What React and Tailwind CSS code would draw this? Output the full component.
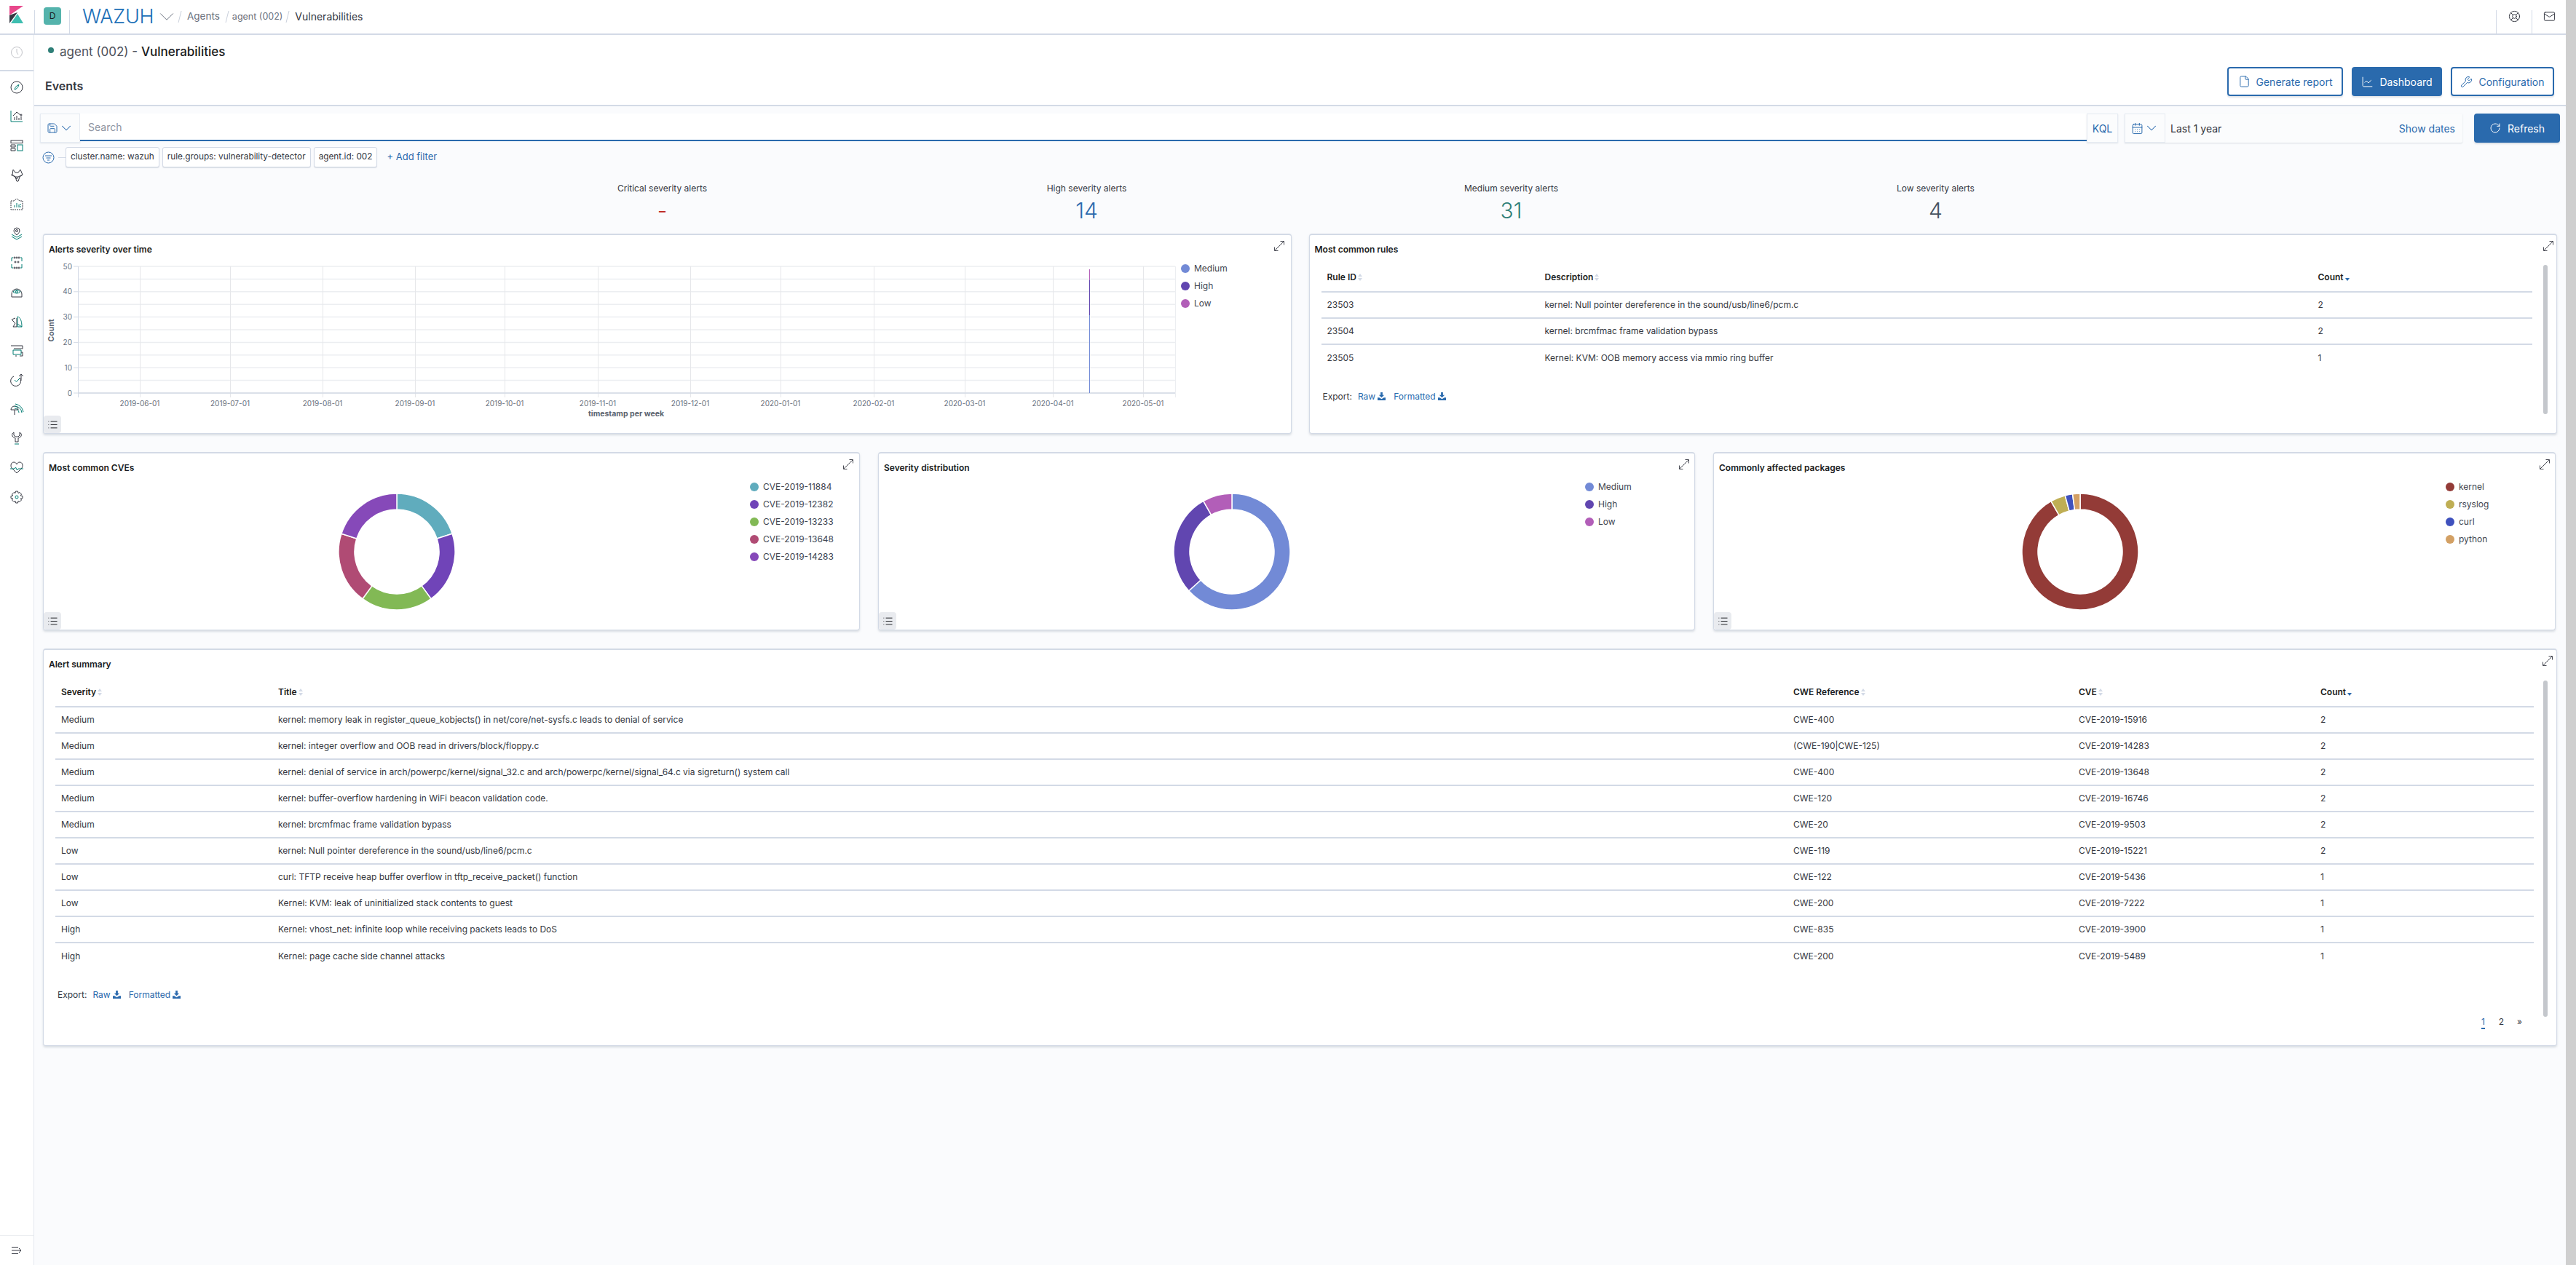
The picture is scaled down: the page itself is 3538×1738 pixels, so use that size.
import { ChartLine, File, LifeBuoy, Mail, RotateCw, Save, Wrench, CalendarDays, ChevronDown, List } from 'lucide-react';

const ink = '#343741';
const teal = '#017d73';

// Two tone app icons of the side nav
function NavIcon({ children, faded }) {
  return (
    <svg viewBox="0 0 20 20" fill="none" stroke={faded ? '#c2c4c9' : ink} strokeWidth="1" className="w-[20px] h-[20px]">
      {children}
    </svg>
  );
}

const navIcons = [
  <NavIcon key="discover">
    <circle cx="10" cy="10" r="8" />
    <path d="M13 6.5c-3 .8-5 2.800-6 6.500 3-.8 5-3 6-6.500z" stroke={teal} />
  </NavIcon>,
  <NavIcon key="visualize">
    <path d="M2 2v15h16" stroke={teal} />
    <path d="M5 9l5-5 5 4" />
    <path d="M7 15v-4M10 15V9M13 15v-3M16 15v-5" />
    <circle cx="16" cy="8" r="1" />
  </NavIcon>,
  <NavIcon key="dashboard">
    <rect x="2" y="3" width="16" height="3.500" />
    <path d="M2 9h6v3H2zM2 14h6v3H2z" />
    <rect x="11" y="9" width="7" height="8" stroke={teal} />
  </NavIcon>,
  <NavIcon key="wazuh">
    <path d="M5 2l3 4h4l3-4 3 7-4 3-2 6h-2l-2-6-4-3z" />
    <path d="M2 9l6 3h4l6-3M8 12l2 3 2-3" />
  </NavIcon>,
  <NavIcon key="canvas">
    <path d="M2 5h4l4-3 4 3h4v12H2z" strokeDasharray="2 1" />
    <path d="M7 14v-3M10 14V8M13 14v-4" stroke={teal} />
    <path d="M15 9v2M15 12v2" stroke={teal} />
  </NavIcon>,
  <NavIcon key="maps">
    <path d="M10 12c-3-3-4-4.500-4-6a4 4 0 018 0c0 1.500-1 3-4 6z" />
    <circle cx="10" cy="6" r="1.500" />
    <path d="M3 11l7 4 7-4M3 14l7 4 7-4" stroke={teal} />
  </NavIcon>,
  <NavIcon key="ml">
    <path d="M5 3H3v5M15 3h2v5M5 17H3v-5M15 17h2v-5" stroke={teal} />
    <circle cx="7" cy="3" r="1" /><circle cx="10" cy="3" r="1" /><circle cx="13" cy="3" r="1" />
    <circle cx="8" cy="9" r="1" /><circle cx="12" cy="9" r="1" />
    <circle cx="7" cy="17" r="1" /><circle cx="10" cy="17" r="1" /><circle cx="13" cy="17" r="1" />
  </NavIcon>,
  <NavIcon key="metrics">
    <path d="M3 17v-4a7 7 0 1114 0v4H3z" />
    <path d="M5 10c3-3 7-3 10 0-3 2.500-7 2.500-10 0z" stroke={teal} />
    <circle cx="10" cy="10" r="1.500" stroke={teal} />
  </NavIcon>,
  <NavIcon key="logs">
    <path d="M8 5l-5 2 5 5-3 5h5V5" />
    <path d="M11 3c4 1 6 6 6 14h-6z" stroke={teal} />
    <path d="M11 13l6 4" stroke={teal} />
  </NavIcon>,
  <NavIcon key="apm">
    <path d="M2 3h16v4H6" />
    <path d="M5 9h11v6H5z" stroke={teal} />
    <path d="M16 12h2v5h-4M8 17h2" />
  </NavIcon>,
  <NavIcon key="uptime">
    <path d="M14 7a7 7 0 11-8-2" />
    <path d="M7 10l2.500 2.500L14 8" stroke={teal} />
    <path d="M16 11V2M13 5l3-3 3 3" />
  </NavIcon>,
  <NavIcon key="siem">
    <path d="M7 18v-7M2 11a5 5 0 0110 0H2z" />
    <path d="M7 6a10 10 0 0110 9M8 3a14 14 0 0111 11M7 9a6 6 0 016 6" stroke={teal} />
  </NavIcon>,
  <NavIcon key="devtools">
    <path d="M6 2c-2 1-3 3-2 5 .5 1.500 2 2.500 4 3v5h4v-5c2-.5 3.500-1.500 4-3 1-2 0-4-2-5v4l-2 2h-4L6 6z" />
    <path d="M7 18h6" stroke={teal} />
  </NavIcon>,
  <NavIcon key="monitoring">
    <path d="M10 18l-7-7C1 8 2 3 6 3c2 0 3 1 4 3 1-2 2-3 4-3 4 0 5 5 3 8z" />
    <path d="M1 12h6l1.500-2 2 4 1.500-2h7" stroke={teal} />
  </NavIcon>,
  <NavIcon key="management">
    <path d="M8.500 2h3l.5 2.500 2-1 2.500 2.500-1.200 2 2.700.5v3l-2.700.5 1.200 2-2.500 2.500-2-1.200-.5 2.700h-3l-.5-2.700-2 1.200L3.500 14l1.200-2L2 11.500v-3L4.700 8 3.500 6 6 3.500l2 1z" />
    <circle cx="10" cy="10" r="2" stroke={teal} />
  </NavIcon>,
];

function KibanaLogo() {
  return (
    <svg viewBox="0 0 19 24" className="w-[19px] h-[24px]">
      <path d="M0 0h19L0 13z" fill="#e8488b" />
      <path d="M0 13l11-4-11 15z" fill="#343741" />
      <path d="M2 24h17l-8-13z" fill="#3ebeb0" />
    </svg>
  );
}

function Slash({ className }) {
  return (
    <svg viewBox="0 0 6 16" className={`w-[6px] h-[16px] shrink-0 ${className || ''}`} stroke="#c9cfdb" fill="none">
      <path d="M5 0L1 16" />
    </svg>
  );
}

function Expand({ className }) {
  return (
    <svg viewBox="0 0 16 16" fill="none" stroke={ink} strokeWidth="0.9" className={`absolute w-[16px] h-[16px] ${className}`}>
      <path d="M2 14L14 2M9.500 1.500h5v5M1.500 9.500v5h5" />
    </svg>
  );
}

function LegendToggle() {
  return (
    <div className="absolute left-0 bottom-0 w-[24px] h-[24px] bg-[#e9ebef] rounded-[4px] flex items-center justify-center">
      <List className="w-[15px] h-[15px] text-[#1a1c21]" strokeWidth={1.5} />
    </div>
  );
}

function Panel({ title, className, children }) {
  return (
    <div className={`relative bg-white rounded-[4px] border border-t-2 border-[#d3dae6] shadow-[0_2px_3px_rgba(152,162,179,0.35)] ${className}`}>
      <div className="h-[34px] pt-[11px] pl-[7px] text-[12px] leading-[18px] font-semibold text-[#1a1c21]">{title}</div>
      {children}
    </div>
  );
}

function polar(cx, cy, r, deg) {
  const a = ((deg - 90) * Math.PI) / 180;
  return [cx + r * Math.cos(a), cy + r * Math.sin(a)];
}

function Donut({ slices }) {
  const total = slices.reduce((s, x) => s + x.value, 0);
  let start = 0;
  return (
    <svg viewBox="0 0 160 160" className="w-[160px] h-[160px]">
      {slices.map((s) => {
        const sweep = (s.value / total) * 360;
        const end = start + sweep;
        const large = sweep > 180 ? 1 : 0;
        const [x1, y1] = polar(80, 80, 80, start);
        const [x2, y2] = polar(80, 80, 80, end);
        const [x3, y3] = polar(80, 80, 58, end);
        const [x4, y4] = polar(80, 80, 58, start);
        start = end;
        return (
          <path
            key={s.label}
            d={`M${x1} ${y1}A80 80 0 ${large} 1 ${x2} ${y2}L${x3} ${y3}A58 58 0 ${large} 0 ${x4} ${y4}Z`}
            fill={s.color}
            stroke="#fff"
            strokeWidth="1.5"
          />
        );
      })}
    </svg>
  );
}

function Legend({ items, className }) {
  return (
    <div className={`flex flex-col ${className}`}>
      {items.map((i) => (
        <div key={i.label} className="h-[24px] flex items-center gap-[6px] text-[12px] text-[#414550]">
          <span className="w-[12px] h-[12px] rounded-full" style={{ backgroundColor: i.color }} />
          {i.label}
        </div>
      ))}
    </div>
  );
}

function SortIcon({ active }) {
  return (
    <svg viewBox="0 0 6 10" className="inline-block w-[6px] h-[10px] ml-[2px] align-[-1px]">
      {!active && <path d="M3 0l3 4H0z" fill="#d3dae6" />}
      <path d="M3 10L0 6h6z" fill={active ? '#2a6aad' : '#d3dae6'} />
    </svg>
  );
}

function DownloadIcon() {
  return (
    <svg viewBox="0 0 12 12" className="inline-block w-[11px] h-[11px] ml-[3px] align-[-1px]" fill="#2a6aad">
      <path d="M4.500 0h3v4H10L6 8 2 4h2.500zM0 8h2.500L6 10l3.500-2H12v4H0z" />
    </svg>
  );
}

function ExportLinks({ className }) {
  return (
    <div className={`h-[18px] leading-[18px] text-[12px] text-[#343741] ${className}`}>
      Export:
      <span className="ml-[8px] text-[#2a6aad]">Raw<DownloadIcon /></span>
      <span className="ml-[11px] text-[#2a6aad]">Formatted<DownloadIcon /></span>
    </div>
  );
}

function DataTable({ widths, columns, rows, className }) {
  return (
    <table className={`table-fixed text-[12px] text-[#343741] border-collapse ${className}`}>
      <colgroup>
        {widths.map((w, i) => (
          <col key={i} style={{ width: w }} />
        ))}
      </colgroup>
      <thead>
        <tr className="h-[40px] border-b-2 border-[#d3dae6]">
          {columns.map((c, i) => (
            <th key={c} className="pl-[8px] text-left font-semibold text-[#1a1c21]">
              {c}
              <SortIcon active={i === columns.length - 1} />
            </th>
          ))}
        </tr>
      </thead>
      <tbody>
        {rows.map((r, i) => (
          <tr key={i} className={`h-[36px] ${i < rows.length - 1 ? 'border-b-2 border-[#d3dae6]' : ''}`}>
            {r.map((cell, j) => (
              <td key={j} className="pl-[8px] whitespace-nowrap">{cell}</td>
            ))}
          </tr>
        ))}
      </tbody>
    </table>
  );
}

const severity = [
  { label: 'Medium', color: '#728ad6', value: 31 },
  { label: 'High', color: '#6146b0', value: 14 },
  { label: 'Low', color: '#b25eb8', value: 4 },
];

const cves = [
  { label: 'CVE-2019-11884', color: '#60acbd', value: 1 },
  { label: 'CVE-2019-12382', color: '#7044b8', value: 1 },
  { label: 'CVE-2019-13233', color: '#82b955', value: 1 },
  { label: 'CVE-2019-13648', color: '#b04b74', value: 1 },
  { label: 'CVE-2019-14283', color: '#8649b9', value: 1 },
];

const packages = [
  { label: 'kernel', color: '#933b37', value: 44 },
  { label: 'rsyslog', color: '#bfae54', value: 2 },
  { label: 'curl', color: '#3f51bd', value: 1 },
  { label: 'python', color: '#d3a064', value: 1 },
];

const ruleRows = [
  ['23503', 'kernel: Null pointer dereference in the sound/usb/line6/pcm.c', '2'],
  ['23504', 'kernel: brcmfmac frame validation bypass', '2'],
  ['23505', 'Kernel: KVM: OOB memory access via mmio ring buffer', '1'],
];

const alertRows = [
  ['Medium', 'kernel: memory leak in register_queue_kobjects() in net/core/net-sysfs.c leads to denial of service', 'CWE-400', 'CVE-2019-15916', '2'],
  ['Medium', 'kernel: integer overflow and OOB read in drivers/block/floppy.c', '(CWE-190|CWE-125)', 'CVE-2019-14283', '2'],
  ['Medium', 'kernel: denial of service in arch/powerpc/kernel/signal_32.c and arch/powerpc/kernel/signal_64.c via sigreturn() system call', 'CWE-400', 'CVE-2019-13648', '2'],
  ['Medium', 'kernel: buffer-overflow hardening in WiFi beacon validation code.', 'CWE-120', 'CVE-2019-16746', '2'],
  ['Medium', 'kernel: brcmfmac frame validation bypass', 'CWE-20', 'CVE-2019-9503', '2'],
  ['Low', 'kernel: Null pointer dereference in the sound/usb/line6/pcm.c', 'CWE-119', 'CVE-2019-15221', '2'],
  ['Low', 'curl: TFTP receive heap buffer overflow in tftp_receive_packet() function', 'CWE-122', 'CVE-2019-5436', '1'],
  ['Low', 'Kernel: KVM: leak of uninitialized stack contents to guest', 'CWE-200', 'CVE-2019-7222', '1'],
  ['High', 'Kernel: vhost_net: infinite loop while receiving packets leads to DoS', 'CWE-835', 'CVE-2019-3900', '1'],
  ['High', 'Kernel: page cache side channel attacks', 'CWE-200', 'CVE-2019-5489', '1'],
];

const stats = [
  { label: 'Critical severity alerts', value: '-', color: 'text-[#bd271e]' },
  { label: 'High severity alerts', value: '14', color: 'text-[#2a6aad]' },
  { label: 'Medium severity alerts', value: '31', color: 'text-[#2f7f78]' },
  { label: 'Low severity alerts', value: '4', color: 'text-[#45525f]' },
];

const xTicks = [
  [192, '2019-06-01'], [316, '2019-07-01'], [443, '2019-08-01'], [570, '2019-09-01'],
  [693, '2019-10-01'], [821, '2019-11-01'], [948, '2019-12-01'], [1072, '2020-01-01'],
  [1200, '2020-02-01'], [1325, '2020-03-01'], [1446, '2020-04-01'], [1570, '2020-05-01'],
];

function SeverityChart() {
  const grid = Array.from({ length: 11 }, (_, i) => 367 + i * 17.4);
  return (
    <svg viewBox="60 358 1560 222" className="w-[1560px] h-[222px] shrink-0" fontFamily="Inter, sans-serif">
      {grid.map((y) => (
        <line key={y} x1="107" x2="1614" y1={y} y2={y} stroke="#eceef1" strokeWidth="1.5" />
      ))}
      {xTicks.map(([x, label]) => (
        <g key={x}>
          <line x1={x + 0.5} x2={x + 0.5} y1="367" y2="547" stroke="#e6e7ea" />
          <text x={x} y="559" textAnchor="middle" fontSize="10" fill="#69707d">{label}</text>
        </g>
      ))}
      <line x1="107.500" x2="107.500" y1="367" y2="547" stroke="#d3dae6" />
      <line x1="1614.500" x2="1614.500" y1="367" y2="547" stroke="#eceef1" />
      <line x1="107" x2="1614" y1="541" y2="541" stroke="#d3dae6" strokeWidth="1.5" />
      {[50, 40, 30, 20, 10, 0].map((v, i) => (
        <g key={v}>
          <line x1="101" x2="107" y1={367 + i * 34.8} y2={367 + i * 34.8} stroke="#d3dae6" />
          <text x="99" y={370.500 + i * 34.8} textAnchor="end" fontSize="10" fill="#69707d">{v}</text>
        </g>
      ))}
      <line x1="1496.500" x2="1496.500" y1="434" y2="541" stroke="#728ad6" />
      <line x1="1496.500" x2="1496.500" y1="386" y2="434" stroke="#6146b0" />
      <line x1="1496.500" x2="1496.500" y1="371" y2="386" stroke="#b25eb8" />
      <text x="860" y="573" textAnchor="middle" fontSize="10.500" fontWeight="700" fill="#5c6470">timestamp per week</text>
      <text transform="translate(74 455) rotate(-90)" textAnchor="middle" fontSize="10.500" fontWeight="700" fill="#5c6470">Count</text>
    </svg>
  );
}

export default function App() {
  return (
    <div className="flex w-[3538px] h-[1738px] overflow-hidden bg-[#fafbfd] font-[Inter,sans-serif] text-[#343741]">
      <div className="w-[3524px] h-full flex flex-col shrink-0">
        {/* Top bar */}
        <header className="h-[48px] shrink-0 bg-white border-b-2 border-[#d3dae6] flex items-stretch">
          <div className="w-[47px] pt-[8px] pl-[13px]">
            <KibanaLogo />
          </div>
          <div className="mt-[14px] w-[49px] border-l border-r border-[#d3dae6]">
            <div className="-mt-[4px] ml-[12px] w-[24px] h-[24px] rounded-[4px] bg-[#54b3ac] flex items-center justify-center text-[12px] text-[#1a1c21]">
              D
            </div>
          </div>
          <div className="pl-[17px] flex items-center pb-[2px] text-[14px]">
            <span className="w-[98px] text-[27px] font-light tracking-[-0.2px] text-[#1c70b8] leading-none whitespace-nowrap">WAZUH</span>
            <ChevronDown className="w-[34px] h-[34px] text-[#69707d] ml-[1px] mt-[2px]" strokeWidth={0.7} />
            <Slash className="-ml-[2px] mt-[2px]" />
            <span className="ml-[7px] text-[13.500px] text-[#69707d]">Agents</span>
            <Slash className="ml-[7px] mt-[2px]" />
            <span className="ml-[4px] text-[12.500px] mt-[3px] text-[#69707d]">agent (002)</span>
            <Slash className="ml-[4px] mt-[2px]" />
            <span className="ml-[7px] text-[#343741]">Vulnerabilities</span>
          </div>
          <div className="ml-auto mt-[14px] flex h-[32px]">
            <div className="w-[49px] border-l border-[#d3dae6] flex justify-center">
              <LifeBuoy className="w-[17px] h-[17px]" strokeWidth={1.4} />
            </div>
            <div className="w-[47px] border-l border-[#d3dae6] flex justify-center">
              <Mail className="w-[17px] h-[17px]" strokeWidth={1.4} />
            </div>
          </div>
        </header>

        <div className="flex flex-1 min-h-0">
          {/* Side nav */}
          <aside className="w-[47px] shrink-0 bg-white border-r border-[#e4e8ef] flex flex-col">
            <div className="h-[50px] border-b-2 border-[#d3dae6] flex items-center justify-center">
              <NavIcon faded>
                <circle cx="10" cy="10" r="7.500" />
                <path d="M10 5v5l2 3" />
              </NavIcon>
            </div>
            <nav className="flex flex-col items-center pt-[12px] gap-[20.200px]">{navIcons}</nav>
            <div className="mt-auto h-[41px] border-t border-[#eceef1] flex items-center justify-center">
              <svg viewBox="0 0 16 12" className="w-[16px] h-[12px]" fill="none" stroke="#343741" strokeWidth="1">
                <path d="M1 1.500h9M1 6h12M1 10.500h9M11 3l3 3-3 3" />
              </svg>
            </div>
          </aside>

          <main className="flex-1 min-w-0 flex flex-col">
            {/* Title block */}
            <div className="h-[98px] shrink-0 bg-white border-b-2 border-[#d3dae6] relative">
              <div className="pt-[11px] pl-[19px] flex items-center gap-[8px] text-[17px] leading-[24px]">
                <span className="w-[8px] h-[8px] rounded-full bg-[#2f7f78] -mt-[4px]" />
                <span className="text-[#4d515b]">
                  agent (002) - <span className="font-medium text-[#1a1c21]">Vulnerabilities</span>
                </span>
              </div>
              <div className="flex items-center justify-between mt-[9px] pl-[15px] pr-[16px] h-[40px]">
                <span className="mt-[12px] text-[16px] font-semibold text-[#343741]">Events</span>
                <div className="flex gap-[12px] text-[14px]">
                  <button className="w-[159px] h-[40px] flex items-center justify-center gap-[8px] border-2 border-[#2a6aad] rounded-[4px] text-[#2a6aad] shadow-[0_2px_2px_rgba(152,162,179,0.3)]">
                    <File className="w-[17px] h-[18px]" strokeWidth={1.4} />
                    Generate report
                  </button>
                  <button className="w-[124px] h-[40px] flex items-center justify-center gap-[8px] bg-[#2a6aad] rounded-[4px] text-white shadow-[0_2px_2px_rgba(152,162,179,0.3)]">
                    <ChartLine className="w-[17px] h-[17px]" strokeWidth={1.4} />
                    Dashboard
                  </button>
                  <button className="w-[142px] h-[40px] flex items-center justify-center gap-[8px] border-2 border-[#2a6aad] rounded-[4px] text-[#2a6aad] shadow-[0_2px_2px_rgba(152,162,179,0.3)]">
                    <Wrench className="w-[17px] h-[17px]" strokeWidth={1.4} />
                    Configuration
                  </button>
                </div>
              </div>
            </div>

            {/* Search bar */}
            <div className="mt-[10px] mx-[8px] flex h-[40px] shrink-0 text-[14px]">
              <div className="w-[55px] bg-[#fbfcfd] border border-[#e6ebf2] shadow-[0_1px_2px_rgba(152,162,179,0.25)] flex items-center justify-center text-[#2a6aad]">
                <Save className="w-[16px] h-[16px]" strokeWidth={1.5} />
                <ChevronDown className="w-[22px] h-[22px]" strokeWidth={1.1} />
              </div>
              <div className="flex-1 bg-white border-b-2 border-[#2a6aad] mb-[2px] pl-[11px] flex items-center text-[#8d93a0]">Search</div>
              <div className="w-[43px] bg-[#fbfcfd] border border-[#e6ebf2] shadow-[0_1px_2px_rgba(152,162,179,0.25)] flex items-center justify-center text-[#2a6aad]">KQL</div>
              <div className="ml-[9px] w-[464px] flex bg-[#fbfcfd] shadow-[0_1px_2px_rgba(152,162,179,0.35)] rounded-r-[2px]">
                <div className="w-[56px] border border-[#e6ebf2] flex items-center justify-center text-[#2a6aad]">
                  <CalendarDays className="w-[17px] h-[17px]" strokeWidth={1.4} />
                  <ChevronDown className="w-[22px] h-[22px]" strokeWidth={1.1} />
                </div>
                <span className="ml-[7px] self-center text-[#343741]">Last 1 year</span>
                <span className="ml-auto mr-[10px] self-center text-[#2a6aad]">Show dates</span>
              </div>
              <button className="ml-[16px] w-[118px] rounded-[4px] bg-[#2a6aad] text-white flex items-center justify-center gap-[9px] shadow-[0_2px_2px_rgba(152,162,179,0.3)]">
                <RotateCw className="w-[16px] h-[16px]" strokeWidth={1.5} />
                Refresh
              </button>
            </div>

            {/* Filters */}
            <div className="mt-[6px] ml-[11px] flex items-center h-[28px] shrink-0 text-[11.800px]">
              <svg viewBox="0 0 17 17" className="w-[17px] h-[17px]" fill="none" stroke="#2a6aad">
                <circle cx="8.500" cy="8.500" r="7.500" />
                <path d="M4 6h9M5.500 9h6M7 12h3" />
              </svg>
              <span className="w-[10px] ml-[5px] h-px bg-[#d3dae6]" />
              <div className="flex gap-[4px]">
                {['cluster.name: wazuh', 'rule.groups: vulnerability-detector', 'agent.id: 002'].map((f) => (
                  <span key={f} className="h-[28px] px-[6px] flex items-center bg-white border border-[#d3dae6] rounded-[3px] shadow-[0_1px_1px_rgba(152,162,179,0.3)] whitespace-nowrap">
                    {f}
                  </span>
                ))}
              </div>
              <span className="ml-[13px] text-[13px] text-[#2a6aad]">+ Add filter</span>
            </div>

            {/* Stats */}
            <div className="mt-[20px] ml-[571px] w-[2332px] grid grid-cols-4 text-center shrink-0">
              {stats.map((s) => (
                <div key={s.label}>
                  <div className="text-[12px] leading-[18px]">{s.label}</div>
                  <div className={`text-[30px] leading-[36px] font-light mt-[3px] ${s.color}`}>{s.value}</div>
                </div>
              ))}
            </div>

            <div className="mt-[14px] mx-[12px] flex flex-col gap-[25px]">
              {/* First row */}
              <div className="grid grid-cols-2 gap-[24px]">
                <Panel title="Alerts severity over time" className="h-[275px]">
                  <Expand className="top-[7px] right-[8px]" />
                  <div className="flex">
                    <SeverityChart />
                    <Legend items={severity} className="ml-[2px]" />
                  </div>
                  <LegendToggle />
                </Panel>
                <Panel title="Most common rules" className="h-[275px]">
                  <Expand className="top-[7px] right-[3px]" />
                  <div className="absolute top-[41px] right-[12px] w-[6px] h-[205px] bg-[#c4c7cc] rounded-[3px]" />
                  <DataTable
                    className="ml-[16px] mt-[4px] w-[1663px]"
                    widths={['299px', '1062px', '302px']}
                    columns={['Rule ID', 'Description', 'Count']}
                    rows={ruleRows}
                  />
                  <ExportLinks className="ml-[18px] mt-[27px]" />
                </Panel>
              </div>

              {/* Second row */}
              <div className="grid grid-cols-[1122px_1122px_1157px] gap-[25px]">
                <Panel title="Most common CVEs" className="h-[245px]">
                  <Expand className="top-[7px] right-[7px]" />
                  <div className="flex">
                    <div className="flex-1 flex justify-center pt-[21px]">
                      <Donut slices={cves} />
                    </div>
                    <Legend items={cves} className="w-[150px]" />
                  </div>
                  <LegendToggle />
                </Panel>
                <Panel title="Severity distribution" className="h-[245px]">
                  <Expand className="top-[7px] right-[6px]" />
                  <div className="flex">
                    <div className="flex-1 flex justify-center pt-[21px]">
                      <Donut slices={severity} />
                    </div>
                    <Legend items={severity} className="w-[150px]" />
                  </div>
                  <LegendToggle />
                </Panel>
                <Panel title="Commonly affected packages" className="h-[245px]">
                  <Expand className="top-[7px] right-[6px]" />
                  <div className="flex">
                    <div className="flex-1 flex justify-center pt-[21px]">
                      <Donut slices={packages} />
                    </div>
                    <Legend items={packages} className="w-[150px]" />
                  </div>
                  <LegendToggle />
                </Panel>
              </div>

              {/* Third row */}
              <Panel title="Alert summary" className="h-[546px]">
                <Expand className="top-[7px] right-[4px]" />
                <div className="absolute top-[42px] right-[12px] w-[6px] h-[462px] bg-[#c4c7cc] rounded-[3px]" />
                <DataTable
                  className="ml-[16px] mt-[4px] w-[3404px]"
                  widths={['298px', '2081px', '392px', '332px', '301px']}
                  columns={['Severity', 'Title', 'CWE Reference', 'CVE', 'Count']}
                  rows={alertRows}
                />
                <ExportLinks className="ml-[19px] mt-[27px]" />
                <div className="flex justify-end mt-[19px] mr-[38px] text-[12px] leading-[18px]">
                  <span className="w-[25px] text-center"><span className="inline-block text-[#2a6aad] border-b-2 border-[#2a6aad] leading-[16px]">1</span></span>
                  <span className="w-[25px] text-center">2</span>
                  <span className="w-[25px] text-center">»</span>
                </div>
              </Panel>
            </div>
          </main>
        </div>
      </div>
      <div className="flex-1 bg-[#cfcfcf]" />
    </div>
  );
}
